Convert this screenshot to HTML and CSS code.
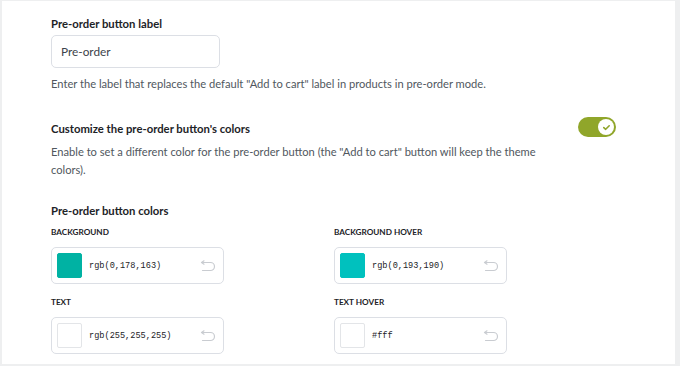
FILE: index.html
```html
<!DOCTYPE html>
<html lang="en">
<head>
<meta charset="utf-8">
<title>Pre-order settings</title>
<link rel="stylesheet" href="styles.css">
</head>
<body>
<div class="panel">
  <div class="content">
    <section class="field">
      <h3 class="title">Pre-order button label</h3>
      <div class="text-input">Pre-order</div>
      <p class="desc">Enter the label that replaces the default "Add to cart" label in products in pre-order mode.</p>
    </section>

    <section class="field toggle-row">
      <div class="toggle-text">
        <h3 class="title">Customize the pre-order button's colors</h3>
        <p class="desc">Enable to set a different color for the pre-order button (the "Add to cart" button will keep the theme colors).</p>
      </div>
      <div class="toggle">
        <span class="knob">
          <svg width="9" height="9" viewBox="0 0 9 9"><path d="M1.8 4.6 L3.7 6.3 L7.2 2.8" fill="none" stroke="#8fa42a" stroke-width="1.6" stroke-linecap="round" stroke-linejoin="round"/></svg>
        </span>
      </div>
    </section>

    <section class="field colors-field">
      <h3 class="title">Pre-order button colors</h3>
      <div class="colors">
        <div class="color-item">
          <span class="cap">Background</span>
          <div class="color-input">
            <span class="swatch swatch-bg"></span>
            <span class="value">rgb(0,178,163)</span>
            <svg class="reset" width="16" height="12" viewBox="0 0 16 12"><path d="M1.5 2.5 H10.5 A4 4 0 0 1 10.5 10.5 H2.5 M4 0.8 L1.5 2.5 L4 4.2" fill="none" stroke="#c9ccd1" stroke-width="1.2" stroke-linecap="round" stroke-linejoin="round"/></svg>
          </div>
        </div>
        <div class="color-item">
          <span class="cap">Background hover</span>
          <div class="color-input">
            <span class="swatch swatch-bgh"></span>
            <span class="value">rgb(0,193,190)</span>
            <svg class="reset" width="16" height="12" viewBox="0 0 16 12"><path d="M1.5 2.5 H10.5 A4 4 0 0 1 10.5 10.5 H2.5 M4 0.8 L1.5 2.5 L4 4.2" fill="none" stroke="#c9ccd1" stroke-width="1.2" stroke-linecap="round" stroke-linejoin="round"/></svg>
          </div>
        </div>
        <div class="color-item">
          <span class="cap">Text</span>
          <div class="color-input">
            <span class="swatch swatch-white"></span>
            <span class="value">rgb(255,255,255)</span>
            <svg class="reset" width="16" height="12" viewBox="0 0 16 12"><path d="M1.5 2.5 H10.5 A4 4 0 0 1 10.5 10.5 H2.5 M4 0.8 L1.5 2.5 L4 4.2" fill="none" stroke="#c9ccd1" stroke-width="1.2" stroke-linecap="round" stroke-linejoin="round"/></svg>
          </div>
        </div>
        <div class="color-item">
          <span class="cap">Text hover</span>
          <div class="color-input">
            <span class="swatch swatch-white"></span>
            <span class="value">#fff</span>
            <svg class="reset" width="16" height="12" viewBox="0 0 16 12"><path d="M1.5 2.5 H10.5 A4 4 0 0 1 10.5 10.5 H2.5 M4 0.8 L1.5 2.5 L4 4.2" fill="none" stroke="#c9ccd1" stroke-width="1.2" stroke-linecap="round" stroke-linejoin="round"/></svg>
          </div>
        </div>
      </div>
    </section>
  </div>
</div>
</body>
</html>
```

FILE: styles.css
```css
* { box-sizing: border-box; }

html, body {
  margin: 0;
  height: 100%;
}

body {
  background: #eeeff0;
  font-family: Lato, "Noto Sans", sans-serif;
  color: #1d2327;
  overflow: hidden;
}

.panel {
  background: #fff;
  margin: 1px 5px 0 2px;
  height: 363px;
}

.content {
  padding: 14px 0 0 49px;
  width: 614px;
}

.title {
  margin: 0;
  font-size: 11.3px;
  font-weight: 700;
  line-height: 17px;
  color: #1d2327;
}

.desc {
  margin: 0;
  font-size: 11.15px;
  line-height: 18px;
  color: #50575e;
}

.field { margin: 0; }

.text-input {
  margin-top: 3px;
  width: 169px;
  height: 33px;
  border: 1px solid #dcdfe5;
  border-radius: 5px;
  padding: 0 0 0 9px;
  font-size: 11.8px;
  line-height: 31px;
  color: #3c434a;
}

.field:first-child .desc { margin-top: 7px; }

.toggle-row {
  margin-top: 27px;
  display: flex;
  align-items: flex-start;
  justify-content: space-between;
}

.toggle-text { width: 500px; }
.toggle-text .desc { margin-top: 6px; }

.toggle {
  margin-top: -3px;
  width: 38px;
  height: 20px;
  border-radius: 10px;
  background: #90a62a;
  display: flex;
  align-items: center;
  justify-content: flex-end;
  padding-right: 2px;
}

.knob {
  width: 16px;
  height: 16px;
  border-radius: 50%;
  background: #fff;
  display: flex;
  align-items: center;
  justify-content: center;
}

.colors-field { margin-top: 23px; }

.colors {
  margin-top: 7px;
  display: grid;
  grid-template-columns: 283px 283px;
  row-gap: 12px;
}

.cap {
  display: block;
  font-size: 8.2px;
  font-weight: 700;
  text-transform: uppercase;
  line-height: 12px;
  color: #1d2327;
}

.color-input {
  margin-top: 9px;
  width: 173px;
  height: 37px;
  border: 1px solid #dcdfe5;
  border-radius: 5px;
  display: flex;
  align-items: center;
  padding: 0 7px 0 5px;
}

.swatch {
  width: 25px;
  height: 25px;
  border: 1px solid #e3e5e8;
  border-radius: 2px;
  flex: none;
}

.swatch-bg { background: #00b2a3; border-color: #00b2a3; }
.swatch-bgh { background: #00c1be; border-color: #00c1be; }
.swatch-white { background: #fff; }

.value {
  margin-left: 7px;
  flex: 1;
  font-family: "Liberation Mono", "DejaVu Sans Mono", monospace;
  font-size: 8.6px;
  color: #1d2327;
}

.reset { flex: none; }
```
